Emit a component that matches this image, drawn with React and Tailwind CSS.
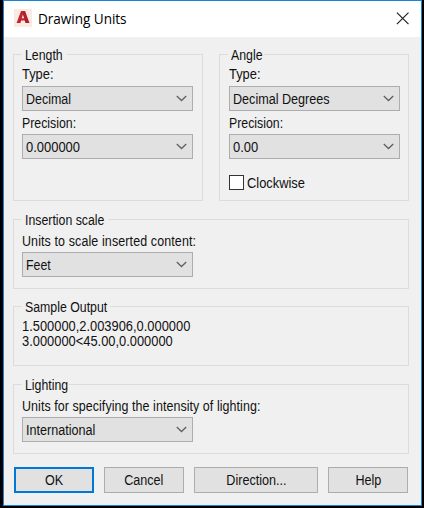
const Text = ({ children, className = "scale-x-[0.88]" }) => (
  <span className={`block origin-left whitespace-pre ${className}`}>{children}</span>
);

function Group({ title, titleWidth, className, children }) {
  return (
    <section className={`border border-[#dcdcdc] px-2 ${className}`}>
      <h2 className={`-mt-2 h-4 bg-[#f0f0f0] pl-[3px] ${titleWidth}`}>
        <Text>{title}</Text>
      </h2>
      {children}
    </section>
  );
}

function Combo({ value, className = "", textClass }) {
  return (
    <div className={`flex h-[25px] w-[171px] items-center justify-between border border-[#adadad] bg-[#e1e1e1] pr-[5px] pl-[3px] ${className}`}>
      <Text className={textClass}>{value}</Text>
      <svg width="11" height="7" viewBox="0 0 11 7" fill="none" stroke="#606060" strokeWidth="1.3">
        <path d="M.8 1 5.5 5.5 10.2 1" />
      </svg>
    </div>
  );
}

function Button({ children, className }) {
  return (
    <button className={`flex h-[26px] items-center justify-center bg-[#e1e1e1] ${className}`}>
      <span className="block scale-x-[0.9]">{children}</span>
    </button>
  );
}

export default function App() {
  return (
    <main className="h-[508px] w-[424px] bg-black pr-[2px] pb-[2px] pl-[3px] font-['Liberation_Sans',sans-serif] text-[14px] leading-4 text-[#111]">
      <div className="h-[506px] border border-[#1883d7] bg-[#f0f0f0]">
        <header className="flex h-9 items-center bg-white pr-[12px] pb-[2px] pl-[10px]">
          <svg width="18" height="18" viewBox="0 0 18 18">
            <rect width="18" height="18" fill="#fbeae4" />
            <path d="M2.6 14 7 2h4l4.4 12h-3.8l-.9-2.5H7.2L6.4 14Z" fill="#c4252d" />
            <path d="M9 5.5 7.8 9.2h2.4Z" fill="#fbeae4" />
            <path d="m11 2 4.4 12h-3.8L9 5.5V2Z" fill="#991d27" opacity=".5" />
          </svg>
          <h1 className="mt-px ml-[6px] font-['Open_Sans',sans-serif] text-[13.6px] tracking-[-0.05px] text-black">
            Drawing Units
          </h1>
          <svg className="ml-auto" width="13" height="13" viewBox="0 0 13 13" stroke="#222" strokeWidth="1.2">
            <path d="m.9.6 11.6 11.6M12.5.6.9 12.2" />
          </svg>
        </header>
        <div className="pt-[17px] pr-3 pl-[9px]">
          <div className="flex justify-between">
            <Group title="Length" titleWidth="w-[45px]" className="h-[147px] w-[190px]">
              <div className="mt-[3px]"><Text className="scale-x-[0.92]">Type:</Text></div>
              <Combo value="Decimal" className="mt-1" textClass="scale-x-[0.89]" />
              <div className="mt-1"><Text>Precision:</Text></div>
              <Combo value="0.000000" className="mt-[3px]" textClass="scale-x-[0.925]" />
            </Group>
            <Group title="Angle" titleWidth="w-[36px]" className="h-[147px] w-[190px]">
              <div className="mt-[3px] ml-[1px]"><Text className="scale-x-[0.92]">Type:</Text></div>
              <Combo value="Decimal Degrees" className="mt-1 ml-[1px]" textClass="scale-x-[0.9]" />
              <div className="mt-1 ml-[1px]"><Text>Precision:</Text></div>
              <Combo value="0.00" className="mt-[3px] ml-[1px]" textClass="scale-x-[0.925]" />
              <label className="mt-4 ml-[1px] flex h-[15px] items-center">
                <span className="mr-[3px] size-[15px] border border-[#333] bg-white" />
                <Text className="scale-x-[0.92]">Clockwise</Text>
              </label>
            </Group>
          </div>
          <Group title="Insertion scale" titleWidth="w-[86px]" className="mt-[18px] h-[70px]">
            <div className="mt-[5px]">
              <Text className="scale-x-[0.89] tracking-[0.13px]">Units to scale inserted content:</Text>
            </div>
            <Combo value="Feet" className="mt-[3px]" />
          </Group>
          <Group title="Sample Output" titleWidth="w-[88px]" className="mt-[17px] h-[60px]">
            <div className="mt-1 leading-[15px]">
              <Text className="scale-x-[0.92]">1.500000,2.003906,0.000000</Text>
              <Text className="scale-x-[0.92]">{"3.000000<45.00,0.000000"}</Text>
            </div>
          </Group>
          <Group title="Lighting" titleWidth="w-[47px]" className="mt-[18px] h-[70px]">
            <div className="mt-[5px]">
              <Text className="scale-x-[0.89] tracking-[0.07px]">Units for specifying the intensity of lighting:</Text>
            </div>
            <Combo value="International" className="mt-[3px]" textClass="scale-x-[0.9]" />
          </Group>
          <footer className="mt-[13px] flex gap-[10px] pl-[1px]">
            <Button className="w-[80px] border-2 border-[#0078d7]">OK</Button>
            <Button className="w-[80px] border border-[#adadad]">Cancel</Button>
            <Button className="w-[124px] border border-[#adadad]">Direction...</Button>
            <Button className="w-[80px] border border-[#adadad]">Help</Button>
          </footer>
        </div>
      </div>
    </main>
  );
}
